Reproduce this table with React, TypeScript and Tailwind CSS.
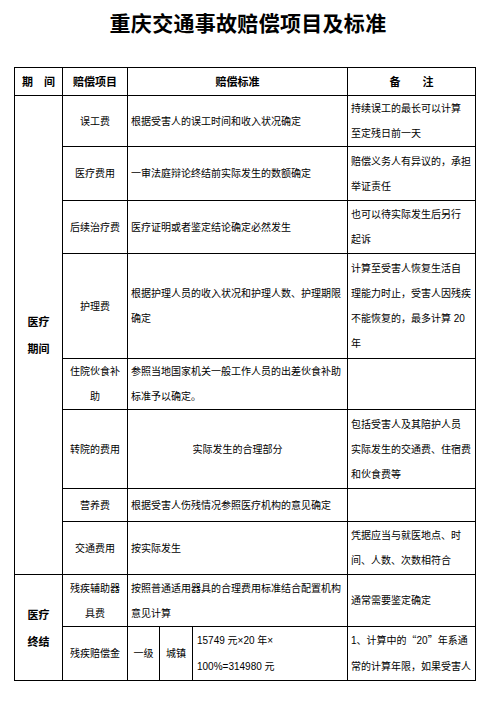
import { JSX } from "react";

type Row = {
    h: number;
    item: string[];
    std: string[];
    stdCenter?: boolean;
    note: string[];
};

const medicalRows: Row[] = [
    { h: 50, item: ["误工费"], std: ["根据受害人的误工时间和收入状况确定"], note: ["持续误工的最长可以计算", "至定残日前一天"] },
    { h: 54, item: ["医疗费用"], std: ["一审法庭辩论终结前实际发生的数额确定"], note: ["赔偿义务人有异议的，承担", "举证责任"] },
    { h: 53, item: ["后续治疗费"], std: ["医疗证明或者鉴定结论确定必然发生"], note: ["也可以待实际发生后另行", "起诉"] },
    {
        h: 105,
        item: ["护理费"],
        std: ["根据护理人员的收入状况和护理人数、护理期限", "确定"],
        note: ["计算至受害人恢复生活自", "理能力时止，受害人因残疾", "不能恢复的，最多计算 20", "年"],
    },
    { h: 51, item: ["住院伙食补", "助"], std: ["参照当地国家机关一般工作人员的出差伙食补助", "标准予以确定。"], note: [] },
    {
        h: 79,
        item: ["转院的费用"],
        std: ["实际发生的合理部分"],
        stdCenter: true,
        note: ["包括受害人及其陪护人员", "实际发生的交通费、住宿费", "和伙食费等"],
    },
    { h: 33, item: ["营养费"], std: ["根据受害人伤残情况参照医疗机构的意见确定"], note: [] },
    { h: 53, item: ["交通费用"], std: ["按实际发生"], note: ["凭据应当与就医地点、时", "间、人数、次数相符合"] },
];

function Lines({ lines, className = "" }: { lines: string[]; className?: string }): JSX.Element {
    return (
        <div className={className}>
            {lines.map((l, i) => (
                <div key={i} className="whitespace-nowrap">
                    {l}
                </div>
            ))}
        </div>
    );
}

const cell = "border border-black p-0 align-middle";
const cjk = "font-['Noto_Sans_CJK_SC',sans-serif]";

export default function App(): JSX.Element {
    return (
        <div className="w-[496px] h-[702px] bg-white text-black font-['Liberation_Sans','Noto_Sans_CJK_SC',sans-serif]">
            <h1 className={`pt-[10px] h-[67px] text-center text-[21px] leading-[24px] font-bold ${cjk} tracking-[0.3px]`}>
                重庆交通事故赔偿项目及标准
            </h1>

            <table className="ml-[14px] w-[461px] table-fixed border-collapse text-[10px] leading-[25px]">
                <colgroup>
                    <col className="w-[48px]" />
                    <col className="w-[65px]" />
                    <col className="w-[32px]" />
                    <col className="w-[33px]" />
                    <col className="w-[155px]" />
                    <col className="w-[128px]" />
                </colgroup>
                <tbody>
                    <tr className={`h-[28px] text-[11px] font-bold ${cjk}`}>
                        <td className={`${cell} text-center`}>期　间</td>
                        <td className={`${cell} text-center`}>赔偿项目</td>
                        <td className={`${cell} text-center`} colSpan={3}>赔偿标准</td>
                        <td className={`${cell} text-center`}>备　　注</td>
                    </tr>

                    {medicalRows.map((r, i) => (
                        <tr key={i} style={{ height: r.h }}>
                            {i === 0 && (
                                <td className={`${cell} text-center`} rowSpan={medicalRows.length}>
                                    <Lines lines={["医疗", "期间"]} className={`text-[11px] font-bold leading-[27px] ${cjk}`} />
                                </td>
                            )}
                            <td className={`${cell} text-center`}>
                                <Lines lines={r.item} />
                            </td>
                            <td className={`${cell} ${r.stdCenter ? "text-center" : "pl-[3px]"}`} colSpan={3}>
                                <Lines lines={r.std} />
                            </td>
                            <td className={`${cell} pl-[3px]`}>
                                <Lines lines={r.note} />
                            </td>
                        </tr>
                    ))}

                    <tr className="h-[52px]">
                        <td className={`${cell} text-center`} rowSpan={2}>
                            <Lines lines={["医疗", "终结"]} className={`text-[11px] font-bold leading-[27px] ${cjk}`} />
                        </td>
                        <td className={`${cell} text-center`}>
                            <Lines lines={["残疾辅助器", "具费"]} />
                        </td>
                        <td className={`${cell} pl-[3px]`} colSpan={3}>
                            <Lines lines={["按照普通适用器具的合理费用标准结合配置机构", "意见计算"]} />
                        </td>
                        <td className={`${cell} pl-[3px]`}>通常需要鉴定确定</td>
                    </tr>
                    <tr className="h-[52px] leading-[26px]">
                        <td className={`${cell} text-center`}>残疾赔偿金</td>
                        <td className={`${cell} text-center`}>一级</td>
                        <td className={`${cell} text-center`}>城镇</td>
                        <td className={`${cell} pl-[4px]`}>
                            <Lines lines={["15749 元×20 年×", "100%=314980 元"]} />
                        </td>
                        <td className={`${cell} pl-[3px]`}>
                            <div className="whitespace-nowrap">
                                1、计算中的<span className={cjk}>“</span>20<span className={cjk}>”</span>年系通
                            </div>
                            <div className="whitespace-nowrap">常的计算年限，如果受害人</div>
                        </td>
                    </tr>
                </tbody>
            </table>
        </div>
    );
}
